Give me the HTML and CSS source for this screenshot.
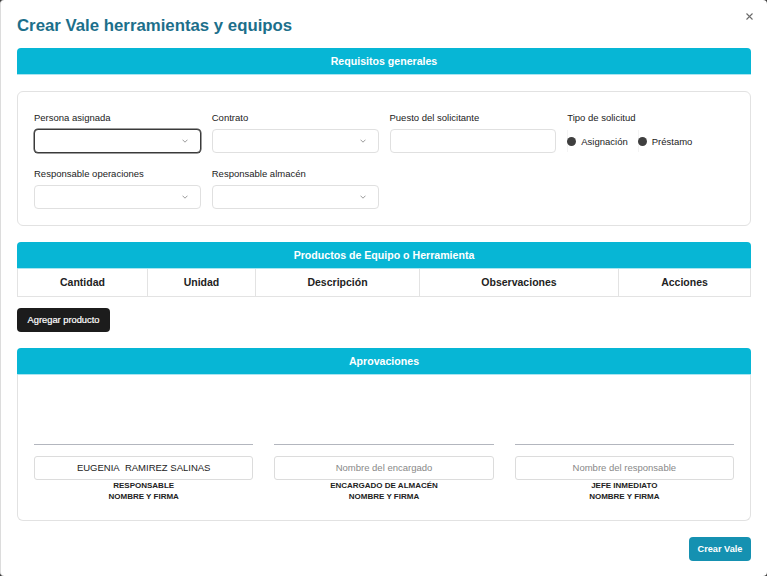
FILE: index.html
```html
<!DOCTYPE html>
<html lang="es">
<head>
<meta charset="utf-8">
<title>Crear Vale herramientas y equipos</title>
<link rel="stylesheet" href="styles.css">
</head>
<body>
<div class="modal">
  <h1 class="title">Crear Vale herramientas y equipos</h1>
  <button class="close" aria-label="Cerrar">
    <svg width="7" height="7" viewBox="0 0 7 7"><path d="M0.5 0.5L6.5 6.5M6.5 0.5L0.5 6.5" stroke="#6b6b6b" stroke-width="1.1" fill="none"/></svg>
  </button>

  <div class="bar">Requisitos generales</div>
  <div class="card">
    <div class="grid">
      <div class="field">
        <label class="lbl">Persona asignada</label>
        <div class="select focus"><span class="chev"><svg width="6" height="4" viewBox="0 0 6 4"><path d="M0.5 0.7L3 3.2L5.5 0.7" stroke="#8f8f8f" stroke-width="0.9" fill="none"/></svg></span></div>
      </div>
      <div class="field">
        <label class="lbl">Contrato</label>
        <div class="select"><span class="chev"><svg width="6" height="4" viewBox="0 0 6 4"><path d="M0.5 0.7L3 3.2L5.5 0.7" stroke="#8f8f8f" stroke-width="0.9" fill="none"/></svg></span></div>
      </div>
      <div class="field">
        <label class="lbl">Puesto del solicitante</label>
        <div class="input"></div>
      </div>
      <div class="field">
        <label class="lbl">Tipo de solicitud</label>
        <div class="radios">
          <span class="opt"><span class="dot"></span>Asignación</span>
          <span class="opt"><span class="dot"></span>Préstamo</span>
        </div>
      </div>
      <div class="field">
        <label class="lbl">Responsable operaciones</label>
        <div class="select"><span class="chev"><svg width="6" height="4" viewBox="0 0 6 4"><path d="M0.5 0.7L3 3.2L5.5 0.7" stroke="#8f8f8f" stroke-width="0.9" fill="none"/></svg></span></div>
      </div>
      <div class="field">
        <label class="lbl">Responsable almacén</label>
        <div class="select"><span class="chev"><svg width="6" height="4" viewBox="0 0 6 4"><path d="M0.5 0.7L3 3.2L5.5 0.7" stroke="#8f8f8f" stroke-width="0.9" fill="none"/></svg></span></div>
      </div>
    </div>
  </div>

  <div class="bar bar-products">Productos de Equipo o Herramienta</div>
  <div class="thead">
    <div class="th">Cantidad</div>
    <div class="th">Unidad</div>
    <div class="th">Descripción</div>
    <div class="th">Observaciones</div>
    <div class="th">Acciones</div>
  </div>
  <button class="btn-dark">Agregar producto</button>

  <div class="bar bar-approvals">Aprovaciones</div>
  <div class="approvals">
    <div class="sign">
      <div class="line"></div>
      <div class="sbox">EUGENIA&nbsp; RAMIREZ SALINAS</div>
      <div class="slabel">RESPONSABLE<br>NOMBRE Y FIRMA</div>
    </div>
    <div class="sign">
      <div class="line"></div>
      <div class="sbox ph">Nombre del encargado</div>
      <div class="slabel">ENCARGADO DE ALMACÉN<br>NOMBRE Y FIRMA</div>
    </div>
    <div class="sign">
      <div class="line"></div>
      <div class="sbox ph">Nombre del responsable</div>
      <div class="slabel">JEFE INMEDIATO<br>NOMBRE Y FIRMA</div>
    </div>
  </div>

  <div class="footer">
    <button class="btn-primary">Crear Vale</button>
  </div>
</div>
</body>
</html>
```

FILE: styles.css
```css
* { box-sizing: border-box; }
html, body { margin: 0; padding: 0; }
body {
  background: #3a3a3a;
  font-family: "Liberation Sans", Arial, sans-serif;
  color: #222;
  width: 767px;
  height: 576px;
  overflow: hidden;
}
.modal {
  position: relative;
  width: 767px;
  height: 576px;
  background: #fff;
  border-left: 1px solid #dcdcdc;
  border-radius: 4px;
  padding: 16px 16px 0 16px;
}
.title {
  margin: 0 0 12px 0;
  font-size: 16.8px;
  line-height: 20px;
  font-weight: bold;
  color: #1c6f8b;
}
.close {
  position: absolute;
  top: 12px;
  right: 13px;
  width: 9px;
  height: 9px;
  padding: 1px;
  border: 0;
  background: transparent;
  display: flex;
  align-items: center;
  justify-content: center;
}
.bar {
  height: 27px;
  background: #07b6d5;
  border-bottom: 1px solid #a9e5f0;
  border-radius: 4px 4px 0 0;
  color: #fff;
  font-weight: bold;
  font-size: 10.6px;
  line-height: 26px;
  text-align: center;
}
.card {
  margin-top: 16px;
  border: 1px solid #e2e2e2;
  border-radius: 6px;
  padding: 20px 16px 16px 16px;
}
.grid {
  display: grid;
  grid-template-columns: repeat(4, 1fr);
  column-gap: 11px;
  row-gap: 15px;
}
.field { display: flex; flex-direction: column; }
.lbl {
  display: block;
  font-size: 9.5px;
  line-height: 12px;
  color: #222;
  margin-bottom: 5px;
}
.select, .input {
  position: relative;
  height: 24px;
  border: 1px solid #e0e0e0;
  border-radius: 4px;
  background: #fff;
}
.select.focus {
  border: 1px solid #3a3a3a;
  box-shadow: 0 0 0 0.5px #3a3a3a;
}
.chev {
  position: absolute;
  right: 12px;
  top: 9px;
  width: 6px;
  height: 4px;
  display: flex;
}
.radios {
  height: 24px;
  display: flex;
  align-items: center;
  gap: 10px;
}
.opt {
  display: flex;
  align-items: center;
  gap: 5px;
  font-size: 9.5px;
  color: #222;
  height: 22px;
  border-left: 1px solid #f4f4f4;
}
.dot {
  width: 9px;
  height: 9px;
  border-radius: 50%;
  background: #3f3f3f;
  margin-left: -1px;
}
.bar-products { margin-top: 16px; }
.thead {
  display: grid;
  grid-template-columns: 130px 108px 164px 199px 1fr;
  height: 28px;
  border-left: 1px solid #e3e3e3;
  border-bottom: 1px solid #e3e3e3;
}
.th {
  border-right: 1px solid #e3e3e3;
  font-size: 10.5px;
  font-weight: bold;
  color: #222;
  line-height: 27px;
  text-align: center;
}
.btn-dark {
  display: block;
  margin-top: 11px;
  width: 93px;
  height: 24px;
  background: #1c1c1c;
  color: #fff;
  border: 0;
  border-radius: 4px;
  font-family: "Liberation Sans", Arial, sans-serif;
  font-size: 9.3px;
  padding: 0;
  -webkit-text-stroke: 0.2px #fff;
}
.bar-approvals { margin-top: 16px; }
.approvals {
  border: 1px solid #e2e2e2;
  border-top: 0;
  border-radius: 0 0 6px 6px;
  padding: 69px 16px 18px 16px;
  display: grid;
  grid-template-columns: repeat(3, 1fr);
  column-gap: 21px;
}
.sign { display: flex; flex-direction: column; }
.line {
  height: 1px;
  background: #b3b6be;
}
.sbox {
  margin-top: 11px;
  height: 24px;
  border: 1px solid #dcdcdc;
  border-radius: 3px;
  font-size: 9.5px;
  line-height: 22px;
  text-align: center;
  color: #222;
}
.sbox.ph { color: #888; }
.slabel {
  margin-top: 1px;
  font-size: 8px;
  line-height: 10.5px;
  font-weight: bold;
  text-align: center;
  color: #222;
}
.footer {
  display: flex;
  justify-content: flex-end;
  margin-top: 16px;
}
.btn-primary {
  width: 62px;
  height: 24px;
  background: #1591b1;
  color: #fff;
  border: 0;
  border-radius: 4px;
  font-family: "Liberation Sans", Arial, sans-serif;
  font-weight: bold;
  font-size: 9.2px;
  padding: 0;
}
```
